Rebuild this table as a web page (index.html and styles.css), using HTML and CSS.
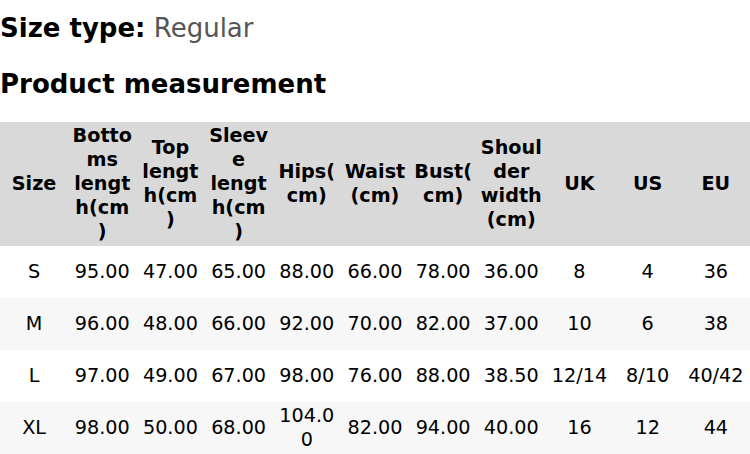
FILE: index.html
```html
<!DOCTYPE html>
<html>
<head>
<meta charset="utf-8">
<link rel="stylesheet" href="styles.css">
</head>
<body>
<div class="page">
  <p class="size-type"><span class="label">Size type:</span> <span class="value">Regular</span></p>
  <h2 class="title">Product measurement</h2>
  <table class="chart">
    <colgroup>
      <col><col><col><col><col><col><col><col><col><col><col>
    </colgroup>
    <thead>
      <tr>
        <th>Size</th>
        <th>Bottoms length(cm)</th>
        <th>Top length(cm)</th>
        <th>Sleeve length(cm)</th>
        <th>Hips(cm)</th>
        <th>Waist (cm)</th>
        <th>Bust(cm)</th>
        <th>Shoulder width (cm)</th>
        <th>UK</th>
        <th>US</th>
        <th>EU</th>
      </tr>
    </thead>
    <tbody>
      <tr><td>S</td><td>95.00</td><td>47.00</td><td>65.00</td><td>88.00</td><td>66.00</td><td>78.00</td><td>36.00</td><td>8</td><td>4</td><td>36</td></tr>
      <tr><td>M</td><td>96.00</td><td>48.00</td><td>66.00</td><td>92.00</td><td>70.00</td><td>82.00</td><td>37.00</td><td>10</td><td>6</td><td>38</td></tr>
      <tr><td>L</td><td>97.00</td><td>49.00</td><td>67.00</td><td>98.00</td><td>76.00</td><td>88.00</td><td>38.50</td><td>12/14</td><td>8/10</td><td>40/42</td></tr>
      <tr><td>XL</td><td>98.00</td><td>50.00</td><td>68.00</td><td>104.00</td><td>82.00</td><td>94.00</td><td>40.00</td><td>16</td><td>12</td><td>44</td></tr>
    </tbody>
  </table>
</div>
</body>
</html>
```
FILE: styles.css
```css
html, body {
  margin: 0;
  padding: 0;
  background: #fff;
}
body {
  font-family: "DejaVu Sans", sans-serif;
  color: #000;
}
.page {
  width: 750px;
  padding-top: 13px;
}
.size-type {
  margin: 0;
  font-size: 26px;
  line-height: 31px;
}
.size-type .label {
  font-weight: bold;
}
.size-type .value {
  color: #555;
}
.title {
  margin: 25px 0 21.5px;
  font-size: 26px;
  line-height: 31px;
  font-weight: bold;
}
.chart {
  width: 750px;
  table-layout: fixed;
  border-collapse: collapse;
  border-spacing: 0;
  font-size: 19.2px;
  line-height: 24px;
}
.chart th,
.chart td {
  padding: 2px 3px;
  text-align: center;
  vertical-align: middle;
  overflow-wrap: break-word;
}
.chart thead tr {
  background: #d9d9d9;
}
.chart th {
  font-weight: bold;
}
.chart tbody tr {
  height: 52px;
}
.chart tbody tr:nth-child(even) {
  background: #f7f7f7;
}
```
